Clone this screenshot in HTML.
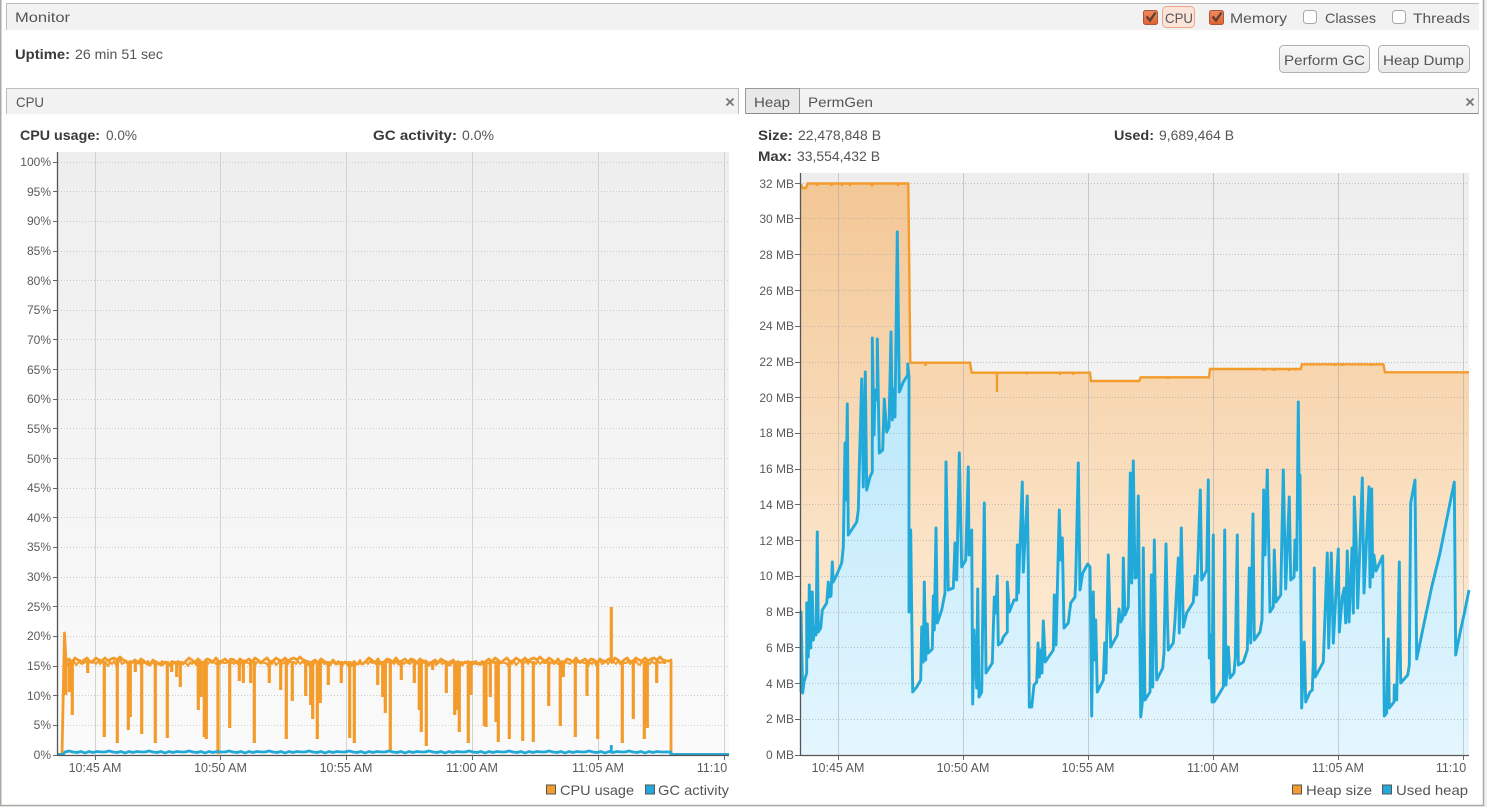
<!DOCTYPE html>
<html><head><meta charset="utf-8"><title>Monitor</title>
<style>
html,body{margin:0;padding:0;background:#fff;width:1487px;height:807px;overflow:hidden}
svg{display:block;position:absolute;left:0;top:0}
text{font-family:"Liberation Sans",sans-serif;font-size:14px;fill:#555}
.b{font-weight:bold;fill:#3a3a3a}
.t{font-size:12px;fill:#5a5a5a}
.e{font-size:12px;fill:#5a5a5a;text-anchor:end}
.m{font-size:12.5px;fill:#5a5a5a;text-anchor:middle}
</style></head><body>
<svg width="1487" height="807" viewBox="0 0 1487 807" xmlns="http://www.w3.org/2000/svg">
<defs>
<linearGradient id="bg1" gradientUnits="userSpaceOnUse" x1="0" y1="152" x2="0" y2="755"><stop offset="0" stop-color="#eeeeee"/><stop offset="1" stop-color="#fafafa"/></linearGradient>
<linearGradient id="bg2" gradientUnits="userSpaceOnUse" x1="0" y1="173" x2="0" y2="755"><stop offset="0" stop-color="#eeeeee"/><stop offset="1" stop-color="#fafafa"/></linearGradient>
<linearGradient id="og" gradientUnits="userSpaceOnUse" x1="0" y1="184" x2="0" y2="755"><stop offset="0" stop-color="#f3c796"/><stop offset="1" stop-color="#fff3e2"/></linearGradient>
<linearGradient id="bl" gradientUnits="userSpaceOnUse" x1="0" y1="184" x2="0" y2="755"><stop offset="0" stop-color="#a5e0f8"/><stop offset="1" stop-color="#e4f6fe"/></linearGradient>
<linearGradient id="btn" x1="0" y1="0" x2="0" y2="1"><stop offset="0" stop-color="#f9f9f9"/><stop offset="1" stop-color="#e9e9e9"/></linearGradient>
<linearGradient id="ck" x1="0" y1="0" x2="0" y2="1"><stop offset="0" stop-color="#f08a60"/><stop offset="1" stop-color="#e2622f"/></linearGradient>
<path id="hb" d="M801 692L801 612L802.7 693L804 682L806.7 673L806.7 603L808.3 657L809.3 585L810.7 648L812.3 592L813.3 640L815 627L816 635L817.3 532L818.3 632L820.7 628L822.3 610L826.7 603L828.3 582L829.3 597L831 596L832.3 562L833.3 582L836.7 575L841.7 563L843.3 547L845 443L846 500L847.3 404L848.3 535L856.7 522L858.3 510L859.3 468L861.7 379L863.3 487L865.3 372L866.7 490L870 477L872.3 472L872.3 338L874 435L875 390L877.3 400L877.3 339L879.3 453L882.7 450L884.3 399L886.7 432L889 427L891 332L892.3 420L893.3 389L895 417L897.3 232L899.3 392L903.3 382L907.7 375L907.7 364L909 377L909 612L910.7 530L912.7 692L916.7 687L920.7 680L921.7 627L923.3 662L924.3 582L925.7 660L927.3 624L928.3 653L932.3 649L933.3 596L934.3 630L936 528L937.3 623L941.7 610L945 593L946 462L948.3 590L953.3 588L955 543L956.7 580L959.3 453L961.7 567L965.7 560L968.3 467L969 555L971.7 530L972.7 704L974 630L976.7 688L977.7 589L979 697L981.7 692L984.3 503L986 673L992.3 663L994.3 597L996 613L997.3 576L998.3 645L1001.7 642L1003.3 637L1007.3 632L1007.3 582L1009.3 612L1014 600L1016.7 600L1017.3 545L1018.3 593L1022.3 482L1023.3 572L1027.3 496L1028.3 567L1029.3 707L1031.7 707L1034 685L1036.7 682L1038 643L1039.3 677L1040.7 650L1042 673L1043.3 621L1045.3 662L1053.3 650L1054.3 595L1056 645L1059.3 510L1060.7 560L1062.3 538L1064 628L1068.3 623L1070.7 603L1075 597L1075.7 580L1078.3 463L1080 590L1082.7 573L1087.7 564L1090 567L1091.7 716L1093.3 592L1094.3 660L1095.7 620L1097.3 692L1103.3 680L1104.7 643L1106 673L1108.3 555L1110.7 647L1117.3 635L1119 609L1120.7 622L1122.7 618L1123.3 558L1125 615L1128.3 607L1130.3 473L1131.7 583L1133.3 461L1135 578L1137.3 577L1138.3 496L1140.7 717L1142.3 703L1143.3 548L1145 700L1150 692L1151.3 575L1152.7 687L1154.3 540L1156.7 680L1162.7 668L1164 653L1166 544L1167.3 613L1168.3 650L1173.3 643L1175 620L1178.3 558L1179.3 633L1181.3 528L1183.3 627L1186.7 613L1193.3 602L1195 576L1196.7 595L1200.3 490L1201.7 580L1206.7 570L1208.3 480L1209.3 658L1210.7 635L1212 702L1213.3 535L1214 702L1216.7 698L1223.3 687L1224.7 530L1226 685L1228.3 647L1230 678L1234 673L1235.3 657L1237.3 535L1238.3 665L1243.3 662L1247.3 650L1249.3 568L1250.7 643L1253 514L1254.3 640L1260 632L1262 620L1263.7 490L1265 555L1267.3 470L1270 612L1273.3 607L1274.3 550L1276 602L1280.7 595L1283.3 470L1285.7 589L1289.3 497L1290.7 580L1294 577L1295 540L1296.7 570L1298.3 402L1299.3 518L1300 475L1301.7 708L1304.3 642L1305.7 702L1310 692L1312.3 690L1313.3 662L1314.3 568L1315.3 677L1323.3 662L1327.3 553L1328.7 648L1331.3 553L1333.3 643L1338.3 549L1339.3 632L1342.3 597L1344.3 588L1345.7 623L1347.3 551L1349 622L1352 548L1353.3 613L1354.3 497L1356 537L1357.7 608L1362.3 478L1364 593L1369 487L1370 587L1371.7 489L1372.7 577L1374 555L1376 571L1382.7 556L1384.3 716L1386.7 713L1388.3 639L1389.3 708L1394 702L1394.3 685L1396.7 700L1399.3 562L1400.7 683L1407.7 675L1409.3 665L1410.7 503L1415 480L1416.7 659L1423.3 627L1431.7 587L1440 553L1450 503L1454.3 482L1455.7 655L1460 633L1465 610L1469 590"/>
</defs>

<!-- outer frame -->
<rect x="1484" y="0" width="3" height="807" fill="#f2f1f0"/>
<rect x="0" y="806" width="1487" height="1" fill="#f2f1f0"/>
<path d="M.75 0V805.5H1483.5V0" fill="none" stroke="#aaa9a4" stroke-width="1.5"/>

<!-- monitor header -->
<rect x="6" y="3" width="1473" height="27" fill="#f2f2f2"/>
<path d="M6.5 30V3.5H1479" fill="none" stroke="#bdbdbd"/>
<text x="15" y="22" textLength="55" lengthAdjust="spacingAndGlyphs">Monitor</text>

<rect x="1162.5" y="6.5" width="32" height="21" rx="4" fill="#fbe4da" stroke="#f0a687"/>
<rect x="1143.5" y="10.5" width="14" height="14" rx="2" fill="url(#ck)" stroke="#a9573a"/>
<path d="M1146.5 16.5l3.5 4 5.5-8" fill="none" stroke="#5e4134" stroke-width="2.4"/>
<text x="1165" y="23" textLength="28" lengthAdjust="spacingAndGlyphs">CPU</text>
<rect x="1209.5" y="10.5" width="14" height="14" rx="2" fill="url(#ck)" stroke="#a9573a"/>
<path d="M1212.5 16.5l3.5 4 5.5-8" fill="none" stroke="#5e4134" stroke-width="2.4"/>
<text x="1230" y="23" textLength="57" lengthAdjust="spacingAndGlyphs">Memory</text>
<rect x="1303.5" y="10.5" width="13" height="13" rx="3" fill="#fff" stroke="#a8a8a8"/>
<text x="1325" y="23" textLength="51" lengthAdjust="spacingAndGlyphs">Classes</text>
<rect x="1392.5" y="10.5" width="13" height="13" rx="3" fill="#fff" stroke="#a8a8a8"/>
<text x="1413" y="23" textLength="57" lengthAdjust="spacingAndGlyphs">Threads</text>

<!-- uptime + buttons -->
<text x="15" y="59" class="b" textLength="55" lengthAdjust="spacingAndGlyphs">Uptime:</text>
<text x="75" y="59" textLength="88" lengthAdjust="spacingAndGlyphs">26 min 51 sec</text>
<rect x="1279.5" y="45.5" width="90" height="27" rx="4" fill="url(#btn)" stroke="#b0b0b0"/>
<text x="1284" y="65" textLength="81" lengthAdjust="spacingAndGlyphs">Perform GC</text>
<rect x="1378.5" y="45.5" width="91" height="27" rx="4" fill="url(#btn)" stroke="#b0b0b0"/>
<text x="1383" y="65" textLength="81" lengthAdjust="spacingAndGlyphs">Heap Dump</text>

<!-- CPU panel header -->
<rect x="6" y="88" width="733" height="26" fill="#f2f2f2"/>
<path d="M6.5 114V88.5H738.5V114" fill="none" stroke="#bdbdbd"/>
<text x="16" y="107" textLength="28" lengthAdjust="spacingAndGlyphs">CPU</text>
<path d="M726.5 98.5l7 7m0-7l-7 7" stroke="#777" stroke-width="1.8" fill="none"/>
<text x="20" y="140" class="b" textLength="80" lengthAdjust="spacingAndGlyphs">CPU usage:</text>
<text x="106" y="140" textLength="31" lengthAdjust="spacingAndGlyphs">0.0%</text>
<text x="373" y="140" class="b" textLength="84" lengthAdjust="spacingAndGlyphs">GC activity:</text>
<text x="462" y="140" textLength="32" lengthAdjust="spacingAndGlyphs">0.0%</text>

<!-- Heap panel header -->
<rect x="745" y="88" width="734" height="25" fill="#f2f2f2"/>
<path d="M745.5 113.5V88.5H1478.5V113.5H745.5" fill="none" stroke="#bdbdbd"/>
<path d="M745.5 113.5H1478.5" stroke="#8a8a8a" fill="none"/>
<rect x="746" y="89" width="53" height="24" fill="#e9e9e9"/>
<path d="M745.5 113V88.5H799.5V113" fill="none" stroke="#9a9a9a"/>
<text x="754" y="107" textLength="36" lengthAdjust="spacingAndGlyphs">Heap</text>
<text x="808" y="107" textLength="65" lengthAdjust="spacingAndGlyphs">PermGen</text>
<path d="M1466.5 98.5l7 7m0-7l-7 7" stroke="#777" stroke-width="1.8" fill="none"/>
<text x="758" y="140" class="b" textLength="35" lengthAdjust="spacingAndGlyphs">Size:</text>
<text x="798" y="140" textLength="83" lengthAdjust="spacingAndGlyphs">22,478,848 B</text>
<text x="1114" y="140" class="b" textLength="40" lengthAdjust="spacingAndGlyphs">Used:</text>
<text x="1159" y="140" textLength="75" lengthAdjust="spacingAndGlyphs">9,689,464 B</text>
<text x="758" y="161" class="b" textLength="34" lengthAdjust="spacingAndGlyphs">Max:</text>
<text x="797" y="161" textLength="83" lengthAdjust="spacingAndGlyphs">33,554,432 B</text>

<!-- CPU chart -->
<rect x="58" y="152" width="671" height="603" fill="url(#bg1)"/>
<path d="M95.5 152V755M220.5 152V755M346.5 152V755M472.5 152V755M598.5 152V755M724.5 152V755" stroke="#d2d2d2" fill="none"/>
<path d="M58 725.5H729M58 695.5H729M58 666.5H729M58 636.5H729M58 606.5H729M58 577.5H729M58 547.5H729M58 517.5H729M58 488.5H729M58 458.5H729M58 428.5H729M58 399.5H729M58 369.5H729M58 339.5H729M58 310.5H729M58 280.5H729M58 251.5H729M58 221.5H729M58 191.5H729M58 162.5H729" stroke="#cbcbcb" stroke-dasharray="1 2" fill="none"/>
<path d="M58 754.5H62L64.5 633L66 661
l3-2 3 3 3-4 3 2 3 3 3-3 3-2 3 4 3-1 3-3 3 2 3 1 3-3 3 3 3-2 3-1 3 2 3-3 3 3 3 1
l3 4 3-3 3-2 3 3 3-4 3 2 3 3 3 1 3-5 3 4 3-1 3 2 3-3 3 1 3 3 3-4 3 2 3-1 3 1 3-3
l3-3 3 2 3 3 3-4 3 5 3-2 3-3 3 1 3 2 3-4 3 4 3-1 3-2 3 3 3-3 3 1 3 3 3-4 3 2 3 0
l3-2 3 3 3-4 3 2 3 3 3-3 3-2 3 4 3-1 3-3 3 2 3 1 3-3 3 3 3-2 3-1 3 2 3-3 3 3 3 1
l3 4 3-3 3-2 3 3 3-4 3 2 3 3 3 1 3-5 3 4 3-1 3 2 3-3 3 1 3 3 3-4 3 2 3-1 3 1 3-3
l3-3 3 2 3 3 3-4 3 5 3-2 3-3 3 1 3 2 3-4 3 4 3-1 3-2 3 3 3-3 3 1 3 3 3-4 3 2 3 0
l3 4 3-3 3-2 3 3 3-4 3 2 3 3 3 1 3-5 3 4 3-1 3 2 3-3 3 1 3 3 3-4 3 2 3-1 3 1 3-3
l3-2 3 3 3-4 3 2 3 3 3-3 3-2 3 4 3-1 3-3 3 2 3 1 3-3 3 3 3-2 3-1 3 2 3-3 3 3 3 1
l3-3 3 2 3 3 3-4 3 5 3-2 3-3 3 1 3 2 3-4 3 4 3-1 3-2 3 3 3-3 3 1 3 3 3-4 3 2 3 0
l3-2 3 3 3-4 3 2 3 3 3-3 3-2 3 4 3-1 3-3 3 2 3 1 3-3 3 3 3-2 3-1 3 2 3-3 3 3 3 1
l4 0 L671 660V754.5H729" fill="none" stroke="#f39c2b" stroke-width="2.8" stroke-linejoin="round"/>
<path d="M66 663
l2 3 2-4 2 2 2-3 2 4 2-2 2-3 2 4 2-1 2-2 2 3 2-3 2 2 2-1 2 2 2-3 2 3 2-2 2 1 2 0
l2 3 2-4 2 2 2-3 2 4 2-2 2-3 2 4 2-1 2-2 2 3 2-3 2 2 2-1 2 2 2-3 2 3 2-2 2 1 2 0
l2-2 2 3 2-2 2 2 2-3 2 3 2 1 2-4 2 3 2-2 2 1 2 1 2-3 2 2 2 1 2-3 2 2 2-1 2 1 2 0
l2 3 2-4 2 2 2-3 2 4 2-2 2-3 2 4 2-1 2-2 2 3 2-3 2 2 2-1 2 2 2-3 2 3 2-2 2 1 2 0
l2-2 2 3 2-2 2 2 2-3 2 3 2 1 2-4 2 3 2-2 2 1 2 1 2-3 2 2 2 1 2-3 2 2 2-1 2 1 2 0
l2 3 2-4 2 2 2-3 2 4 2-2 2-3 2 4 2-1 2-2 2 3 2-3 2 2 2-1 2 2 2-3 2 3 2-2 2 1 2 0
l2-2 2 3 2-2 2 2 2-3 2 3 2 1 2-4 2 3 2-2 2 1 2 1 2-3 2 2 2 1 2-3 2 2 2-1 2 1 2 0
l2 3 2-4 2 2 2-3 2 4 2-2 2-3 2 4 2-1 2-2 2 3 2-3 2 2 2-1 2 2 2-3 2 3 2-2 2 1 2 0
l2-2 2 3 2-2 2 2 2-3 2 3 2 1 2-4 2 3 2-2 2 1 2 1 2-3 2 2 2 1 2-3 2 2 2-1 2 1 2 0
l2 3 2-4 2 2 2-3 2 4 2-2 2-3 2 4 2-1 2-2 2 3 2-3 2 2 2-1 2 2 2-3 2 3 2-2 2 1 2 0
l2-2 2 3 2-2 2 2 2-3 2 3 2 1 2-4 2 3 2-2 2 1 2 1 2-3 2 2 2 1 2-3 2 2 2-1 2 1 2 0
l2 3 2-4 2 2 2-3 2 4 2-2 2-3 2 4 2-1 2-2 2 3 2-3 2 2 2-1 2 2 2-3 2 3 2-2 2 1 2 0
l2-2 2 3 2-2 2 2 2-3 2 3 2 1 2-4 2 3 2-2 2 1 2 1 2-3 2 2 2 1 2-3 2 2 2-1 2 1 2 0
l2 3 2-4 2 2 2-3 2 4 2-2 2-3 2 4 2-1 2-2 2 3 2-3 2 2 2-1 2 2 2-3 2 3 2-2 2 1 2 0
l2-2 2 3 2-2 2 2 2-3 2 3 2 1 2-4 2 3 2-2 2 1 2 1 2-3 2 2 2 1 2-3 2 2 2-1 2 1 2 0" fill="none" stroke="#f39c2b" stroke-width="2" stroke-linejoin="round"/>
<path d="M65.7 661V695M69.3 661V692M72.3 661V715M87.7 661V673M104.3 661V737M117.3 661V743M128.3 661V730M130.3 661V717M135.3 661V672M141.7 661V734M155.3 661V743M167.3 661V738M171.7 661V672M176.7 661V677M180.3 661V687M198.3 661V710M201 661V697M204.3 661V737M206.3 661V739M218 661V754M229.7 661V728M239.3 661V681M243.3 661V683M250.7 661V683M254.3 661V743M269.3 661V683M280.7 661V690M286.3 661V739M292.3 661V701M305.7 661V696M310.7 661V705M312.7 661V719M317.3 661V739M320.3 661V703M328.3 661V685M341.3 661V683M349.7 661V738M354.3 661V743M377.7 661V685M382.7 661V697M385.3 661V713M390.3 661V751M401.3 661V680M414.3 661V683M419.3 661V710M421.3 661V732M426.3 661V746M432.7 661V670M446.3 661V693M454.7 661V715M457.3 661V710M459.3 661V732M468.3 661V743M471 661V695M484.3 661V726M486 661V727M490.3 661V697M496 661V722M498.3 661V742M509.3 661V739M522.7 661V741M533.3 661V742M548.7 661V706M560.3 661V726M563.3 661V677M575.3 661V737M587 661V696M597.7 661V739M611.3 661V607M622.3 661V743M633.3 661V719M644.3 661V739M647.3 661V728M656.7 661V683" fill="none" stroke="#f39c2b" stroke-width="3.2"/>
<path d="M58 754.5H63L65 752
l4-1 4 1 4 .5 4-1 4 1.5 4-1.5 4 1 4-1 4 .5 4 0
l4-1 4 1 4 .5 4-1 4 1.5 4-1.5 4 1 4-1 4 .5 4 0
l4-1 4 1 4 .5 4-1 4 1.5 4-1.5 4 1 4-1 4 .5 4 0
l4-1 4 1 4 .5 4-1 4 1.5 4-1.5 4 1 4-1 4 .5 4 0
l4-1 4 1 4 .5 4-1 4 1.5 4-1.5 4 1 4-1 4 .5 4 0
l4-1 4 1 4 .5 4-1 4 1.5 4-1.5 4 1 4-1 4 .5 4 0
l4-1 4 1 4 .5 4-1 4 1.5 4-1.5 4 1 4-1 4 .5 4 0
l4-1 4 1 4 .5 4-1 4 1.5 4-1.5 4 1 4-1 4 .5 4 0
l4-1 4 1 4 .5 4-1 4 1.5 4-1.5 4 1 4-1 4 .5 4 0
l4-1 4 1 4 .5 4-1 4 1.5 4-1.5 4 1 4-1 4 .5 4 0
l4-1 4 1 4 .5 4-1 4 1.5 4-1.5 4 1 4-1 4 .5 4 0
l4-1 4 1 4 .5 4-1 4 1.5 4-1.5 4 1 4-1 4 .5 4 0
l4-1 4 1 4 .5 4-1 4 1.5 4-1.5 4 1 4-1 4 .5 4 0
l4-1 4 1 4 .5 4-1 4 1.5 4-1.5 4 1 4-1 4 .5 4 0
l4-1 4 1 4 .5 4-1 4 1.5 4-1.5 4 1 4-1 4 .5 4 0
L671 752V754.5H729M611.3 752V745" fill="none" stroke="#21a9d9" stroke-width="2.8" stroke-linejoin="round"/>
<path d="M57.5 152V755.5H729" fill="none" stroke="#555" stroke-width="1.3"/>
<path d="M53 755.5h5M53 725.5h5M53 695.5h5M53 666.5h5M53 636.5h5M53 606.5h5M53 577.5h5M53 547.5h5M53 517.5h5M53 488.5h5M53 458.5h5M53 428.5h5M53 399.5h5M53 369.5h5M53 339.5h5M53 310.5h5M53 280.5h5M53 251.5h5M53 221.5h5M53 191.5h5M53 162.5h5M95.5 755v5M220.5 755v5M346.5 755v5M472.5 755v5M598.5 755v5M724.5 755v5" stroke="#666" fill="none"/>
<text x="51" y="759" class="e">0%</text><text x="51" y="729" class="e">5%</text><text x="51" y="700" class="e">10%</text><text x="51" y="670" class="e">15%</text><text x="51" y="640" class="e">20%</text><text x="51" y="611" class="e">25%</text><text x="51" y="581" class="e">30%</text><text x="51" y="551" class="e">35%</text><text x="51" y="522" class="e">40%</text><text x="51" y="492" class="e">45%</text><text x="51" y="463" class="e">50%</text><text x="51" y="433" class="e">55%</text><text x="51" y="403" class="e">60%</text><text x="51" y="374" class="e">65%</text><text x="51" y="344" class="e">70%</text><text x="51" y="314" class="e">75%</text><text x="51" y="285" class="e">80%</text><text x="51" y="255" class="e">85%</text><text x="51" y="225" class="e">90%</text><text x="51" y="196" class="e">95%</text><text x="51" y="166" class="e">100%</text>
<text x="95" y="772" class="m">10:45 AM</text><text x="220.5" y="772" class="m">10:50 AM</text><text x="346" y="772" class="m">10:55 AM</text><text x="472" y="772" class="m">11:00 AM</text><text x="598" y="772" class="m">11:05 AM</text><text x="712" y="772" class="m">11:10</text>
<rect x="546.5" y="785" width="9" height="9" fill="#f39c2b" stroke="#555"/>
<text x="560" y="795" textLength="74" lengthAdjust="spacingAndGlyphs">CPU usage</text>
<rect x="645.5" y="785" width="9" height="9" fill="#21a9d9" stroke="#555"/>
<text x="658" y="795" textLength="71" lengthAdjust="spacingAndGlyphs">GC activity</text>

<!-- Heap chart -->
<rect x="800" y="173" width="669" height="582" fill="url(#bg2)"/>
<path d="M801 184L802.3 188H806L807.7 183.5H908.3L910.3 362.7H970L971.7 372.7H1090L1091 381H1139.3L1140.7 377.3H1209L1210 369H1300.7L1302 364.3H1383.3L1385 372.3H1469V755H801Z" fill="url(#og)"/>
<path d="M801 692L801 612L802.7 693L804 682L806.7 673L806.7 603L808.3 657L809.3 585L810.7 648L812.3 592L813.3 640L815 627L816 635L817.3 532L818.3 632L820.7 628L822.3 610L826.7 603L828.3 582L829.3 597L831 596L832.3 562L833.3 582L836.7 575L841.7 563L843.3 547L845 443L846 500L847.3 404L848.3 535L856.7 522L858.3 510L859.3 468L861.7 379L863.3 487L865.3 372L866.7 490L870 477L872.3 472L872.3 338L874 435L875 390L877.3 400L877.3 339L879.3 453L882.7 450L884.3 399L886.7 432L889 427L891 332L892.3 420L893.3 389L895 417L897.3 232L899.3 392L903.3 382L907.7 375L907.7 364L909 377L909 612L910.7 530L912.7 692L916.7 687L920.7 680L921.7 627L923.3 662L924.3 582L925.7 660L927.3 624L928.3 653L932.3 649L933.3 596L934.3 630L936 528L937.3 623L941.7 610L945 593L946 462L948.3 590L953.3 588L955 543L956.7 580L959.3 453L961.7 567L965.7 560L968.3 467L969 555L971.7 530L972.7 704L974 630L976.7 688L977.7 589L979 697L981.7 692L984.3 503L986 673L992.3 663L994.3 597L996 613L997.3 576L998.3 645L1001.7 642L1003.3 637L1007.3 632L1007.3 582L1009.3 612L1014 600L1016.7 600L1017.3 545L1018.3 593L1022.3 482L1023.3 572L1027.3 496L1028.3 567L1029.3 707L1031.7 707L1034 685L1036.7 682L1038 643L1039.3 677L1040.7 650L1042 673L1043.3 621L1045.3 662L1053.3 650L1054.3 595L1056 645L1059.3 510L1060.7 560L1062.3 538L1064 628L1068.3 623L1070.7 603L1075 597L1075.7 580L1078.3 463L1080 590L1082.7 573L1087.7 564L1090 567L1091.7 716L1093.3 592L1094.3 660L1095.7 620L1097.3 692L1103.3 680L1104.7 643L1106 673L1108.3 555L1110.7 647L1117.3 635L1119 609L1120.7 622L1122.7 618L1123.3 558L1125 615L1128.3 607L1130.3 473L1131.7 583L1133.3 461L1135 578L1137.3 577L1138.3 496L1140.7 717L1142.3 703L1143.3 548L1145 700L1150 692L1151.3 575L1152.7 687L1154.3 540L1156.7 680L1162.7 668L1164 653L1166 544L1167.3 613L1168.3 650L1173.3 643L1175 620L1178.3 558L1179.3 633L1181.3 528L1183.3 627L1186.7 613L1193.3 602L1195 576L1196.7 595L1200.3 490L1201.7 580L1206.7 570L1208.3 480L1209.3 658L1210.7 635L1212 702L1213.3 535L1214 702L1216.7 698L1223.3 687L1224.7 530L1226 685L1228.3 647L1230 678L1234 673L1235.3 657L1237.3 535L1238.3 665L1243.3 662L1247.3 650L1249.3 568L1250.7 643L1253 514L1254.3 640L1260 632L1262 620L1263.7 490L1265 555L1267.3 470L1270 612L1273.3 607L1274.3 550L1276 602L1280.7 595L1283.3 470L1285.7 589L1289.3 497L1290.7 580L1294 577L1295 540L1296.7 570L1298.3 402L1299.3 518L1300 475L1301.7 708L1304.3 642L1305.7 702L1310 692L1312.3 690L1313.3 662L1314.3 568L1315.3 677L1323.3 662L1327.3 553L1328.7 648L1331.3 553L1333.3 643L1338.3 549L1339.3 632L1342.3 597L1344.3 588L1345.7 623L1347.3 551L1349 622L1352 548L1353.3 613L1354.3 497L1356 537L1357.7 608L1362.3 478L1364 593L1369 487L1370 587L1371.7 489L1372.7 577L1374 555L1376 571L1382.7 556L1384.3 716L1386.7 713L1388.3 639L1389.3 708L1394 702L1394.3 685L1396.7 700L1399.3 562L1400.7 683L1407.7 675L1409.3 665L1410.7 503L1415 480L1416.7 659L1423.3 627L1431.7 587L1440 553L1450 503L1454.3 482L1455.7 655L1460 633L1465 610L1469 590V755H801Z" fill="url(#bl)"/>
<path d="M838.5 173V755M963.5 173V755M1088.5 173V755M1213.5 173V755M1338.5 173V755M1463.5 173V755" stroke="#a9a9a9" stroke-opacity=".55" fill="none"/>
<path d="M800 719.5H1469M800 683.5H1469M800 647.5H1469M800 612.5H1469M800 576.5H1469M800 540.5H1469M800 504.5H1469M800 469.5H1469M800 433.5H1469M800 397.5H1469M800 362.5H1469M800 326.5H1469M800 290.5H1469M800 254.5H1469M800 218.5H1469M800 183.5H1469" stroke="#a8a8a8" stroke-opacity=".7" stroke-dasharray="1 2" fill="none"/>
<path d="M801 184L802.3 188H806L807.7 183.5H908.3L910.3 362.7H970L971.7 372.7H1090L1091 381H1139.3L1140.7 377.3H1209L1210 369H1300.7L1302 364.3H1383.3L1385 372.3H1469M817 184v2M831.5 184v2M842 184v2M850 184v2M872 184v2.5M898 184v2M925.5 363v3M997 373v19M1027 373v1.5M1060 373v2M1073 373v2M1120 381v1M1168 377v2M1264 369v2M1274 369v2M1289 369v2M1295 369v1.5M1335 364v2M1342 364v2M1371 364v2" fill="none" stroke="#f39c2b" stroke-width="2.4"/>
<use href="#hb" fill="none" stroke="#21a9d9" stroke-width="2.9" stroke-linejoin="round"/>
<path d="M800.5 173V755.5H1469" fill="none" stroke="#555" stroke-width="1.3"/>
<path d="M795 755.5h5M795 719.5h5M795 683.5h5M795 647.5h5M795 612.5h5M795 576.5h5M795 540.5h5M795 504.5h5M795 469.5h5M795 433.5h5M795 397.5h5M795 362.5h5M795 326.5h5M795 290.5h5M795 254.5h5M795 218.5h5M795 183.5h5M838.5 755v5M963.5 755v5M1088.5 755v5M1213.5 755v5M1338.5 755v5M1463.5 755v5" stroke="#666" fill="none"/>
<text x="794" y="759" class="e">0 MB</text><text x="794" y="723" class="e">2 MB</text><text x="794" y="688" class="e">4 MB</text><text x="794" y="652" class="e">6 MB</text><text x="794" y="616" class="e">8 MB</text><text x="794" y="580" class="e">10 MB</text><text x="794" y="545" class="e">12 MB</text><text x="794" y="509" class="e">14 MB</text><text x="794" y="473" class="e">16 MB</text><text x="794" y="437" class="e">18 MB</text><text x="794" y="402" class="e">20 MB</text><text x="794" y="366" class="e">22 MB</text><text x="794" y="330" class="e">24 MB</text><text x="794" y="295" class="e">26 MB</text><text x="794" y="259" class="e">28 MB</text><text x="794" y="223" class="e">30 MB</text><text x="794" y="188" class="e">32 MB</text>
<text x="838" y="772" class="m">10:45 AM</text><text x="963" y="772" class="m">10:50 AM</text><text x="1088" y="772" class="m">10:55 AM</text><text x="1213" y="772" class="m">11:00 AM</text><text x="1338" y="772" class="m">11:05 AM</text><text x="1451" y="772" class="m">11:10</text>
<rect x="1292.5" y="785" width="9" height="9" fill="#f39c2b" stroke="#555"/>
<text x="1306" y="795" textLength="66" lengthAdjust="spacingAndGlyphs">Heap size</text>
<rect x="1382.5" y="785" width="9" height="9" fill="#21a9d9" stroke="#555"/>
<text x="1396" y="795" textLength="72" lengthAdjust="spacingAndGlyphs">Used heap</text>
</svg>
</body></html>
